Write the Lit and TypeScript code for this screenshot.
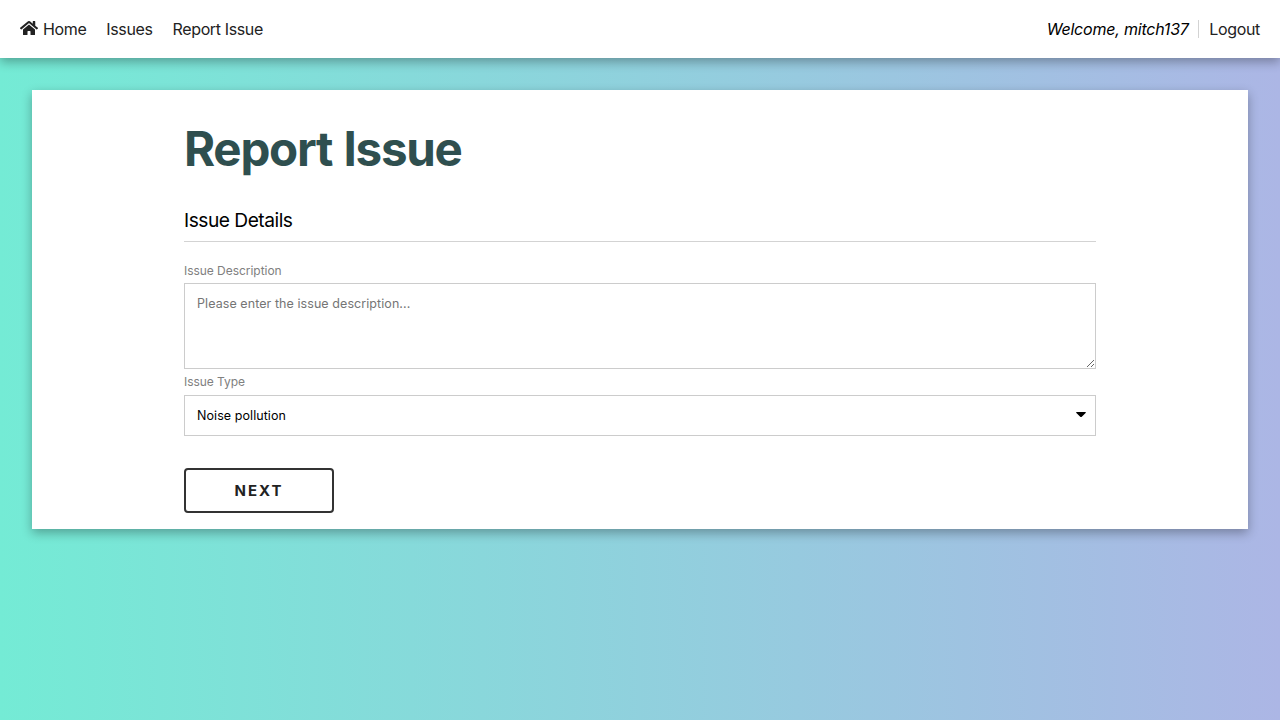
import { LitElement, html, css } from "lit";
import { customElement } from "lit/decorators.js";

@customElement("app-root")
export class AppRoot extends LitElement {
  static styles = css`
    :host {
      display: block;
      min-height: 100vh;
      box-sizing: border-box;
      font-family: Inter, sans-serif;
      font-size: 16px;
      line-height: 18px;
      color: #000;
      background: linear-gradient(to right, #74ebd5, #acb6e5);
    }
    * { box-sizing: border-box; }
    .nav {
      height: 58px;
      padding: 0 20px;
      display: flex;
      align-items: center;
      justify-content: space-between;
      background: #fff;
      box-shadow: 0 4px 10px rgba(0, 0, 0, 0.3);
    }
    .links { display: flex; gap: 20px; }
    .link { color: #222; text-decoration: none; display: flex; align-items: center; gap: 5px; letter-spacing: -0.37px; }
    .home { width: 18px; height: 16px; position: relative; top: -1px; }
    .user { display: flex; }
    .user .link { letter-spacing: -0.32px; }
    .welcome { font-style: italic; letter-spacing: -0.21px; padding-right: 9.5px; border-right: 1px solid #d3d3d3; margin-right: 10px; }
    .card {
      margin: 32px 32px 0;
      padding: 31px 152px 16px;
      height: 439px;
      background: #fff;
      box-shadow: 0 4px 10px rgba(0, 0, 0, 0.3);
    }
    h1 { margin: 0; font-size: 47.5px; line-height: 56px; font-weight: 700; color: #2f4f4f; letter-spacing: -1.25px; word-spacing: 1.3px; }
    h2 { margin: 31px 0 20px; height: 34px; font-size: 19.2px; line-height: 24px; font-weight: 400; border-bottom: 1px solid #d3d3d3; letter-spacing: -0.5px; }
    label { display: block; font-size: 12px; line-height: 18px; color: #808080; letter-spacing: -0.04px; }
    textarea, .select { width: 100%; display: block; border: 1px solid #ccc; background: #fff; font: 12.5px/16px Inter, sans-serif; letter-spacing: 0.07px; padding: 12px; margin: 3px 0 4px; outline: none; border-radius: 0; }
    textarea { height: 86px; }
    textarea::placeholder { color: #757575; }
    .select { height: 41px; margin-top: 4px; display: flex; align-items: center; justify-content: space-between; padding: 0 9px 0 12px; }
    .caret { width: 10px; height: 5px; margin-bottom: 2px; }
    button { margin-top: 28px; width: 150px; height: 45px; border: 2px solid #333; border-radius: 4px; background: #fff; color: #222; font: 700 15px/18px Inter, sans-serif; letter-spacing: 2px; padding: 0; }
  `;

  render() {
    return html`
      <nav class="nav">
        <div class="links">
          <a class="link"><svg class="home" viewBox="0 0 576 512" fill="currentColor"><path d="M280.37 148.26L96 300.11V464a16 16 0 0 0 16 16l112.06-.29a16 16 0 0 0 15.92-16V368a16 16 0 0 1 16-16h64a16 16 0 0 1 16 16v95.64a16 16 0 0 0 16 16.05L464 480a16 16 0 0 0 16-16V300L295.67 148.26a12.19 12.19 0 0 0-15.3 0zM571.6 251.47L488 182.56V44.05a12 12 0 0 0-12-12h-56a12 12 0 0 0-12 12v72.61L318.47 43a48 48 0 0 0-61 0L4.34 251.47a12 12 0 0 0-1.6 16.9l25.5 31A12 12 0 0 0 45.15 301l235.22-193.74a12.19 12.19 0 0 1 15.3 0L530.9 301a12 12 0 0 0 16.9-1.6l25.5-31a12 12 0 0 0-1.7-16.93z"/></svg>Home</a>
          <a class="link">Issues</a>
          <a class="link">Report Issue</a>
        </div>
        <div class="user"><span class="welcome">Welcome, mitch137</span><a class="link">Logout</a></div>
      </nav>
      <main class="card">
        <h1>Report Issue</h1>
        <h2>Issue Details</h2>
        <label for="description">Issue Description</label>
        <textarea id="description" placeholder="Please enter the issue description..."></textarea>
        <label>Issue Type</label>
        <div class="select"><span>Noise pollution</span><svg class="caret" viewBox="0 0 10 5"><path d="M.6 0h8.8q.8.3.2.9L5.8 4.7q-.8.6-1.6 0L.4.9Q-.2.3.6 0z"/></svg></div>
        <button>NEXT</button>
      </main>
    `;
  }
}
